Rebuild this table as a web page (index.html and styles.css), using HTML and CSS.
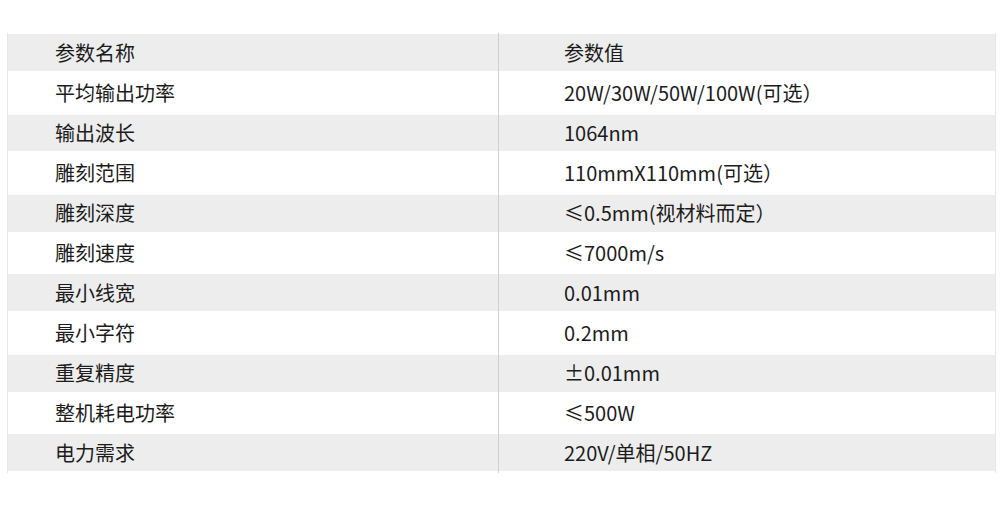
FILE: index.html
```html
<!DOCTYPE html>
<html lang="zh-CN">
<head>
<meta charset="utf-8">
<title>参数</title>
<link rel="stylesheet" href="styles.css">
</head>
<body>
<div class="spec">
  <div class="row alt"><div class="k">参数名称</div><div class="v">参数值</div></div>
  <div class="row"><div class="k">平均输出功率</div><div class="v">20W/30W/50W/100W(可选）</div></div>
  <div class="row alt"><div class="k">输出波长</div><div class="v">1064nm</div></div>
  <div class="row"><div class="k">雕刻范围</div><div class="v">110mmX110mm(可选）</div></div>
  <div class="row alt"><div class="k">雕刻深度</div><div class="v">≤0.5mm(视材料而定）</div></div>
  <div class="row"><div class="k">雕刻速度</div><div class="v">≤7000m/s</div></div>
  <div class="row alt"><div class="k">最小线宽</div><div class="v">0.01mm</div></div>
  <div class="row"><div class="k">最小字符</div><div class="v">0.2mm</div></div>
  <div class="row alt"><div class="k">重复精度</div><div class="v">±0.01mm</div></div>
  <div class="row"><div class="k">整机耗电功率</div><div class="v">≤500W</div></div>
  <div class="row alt"><div class="k">电力需求</div><div class="v">220V/单相/50HZ</div></div>
</div>
</body>
</html>
```
FILE: styles.css
```css
html, body {
  margin: 0;
  padding: 0;
  background: #ffffff;
}
body {
  font-family: "Noto Sans CJK SC", "Noto Sans", sans-serif;
  color: #1c1c1c;
  font-size: 20px;
}
.spec {
  margin: 33px 0 0 7px;
  width: 989px;
  border-left: 1px solid #e6e6e6;
  border-right: 1px solid #e6e6e6;
  box-sizing: border-box;
}
.row {
  display: grid;
  grid-template-columns: 490px 1fr;
  height: 40px;
}
.row.alt {
  background: linear-gradient(to bottom, transparent 1.5px, #ededed 1.5px, #ededed 38.5px, transparent 38.5px);
}
.k, .v {
  line-height: 40px;
  white-space: nowrap;
}
.k {
  padding-left: 47px;
}
.v {
  border-left: 1px solid #cfcfcf;
  padding-left: 65px;
}
```
